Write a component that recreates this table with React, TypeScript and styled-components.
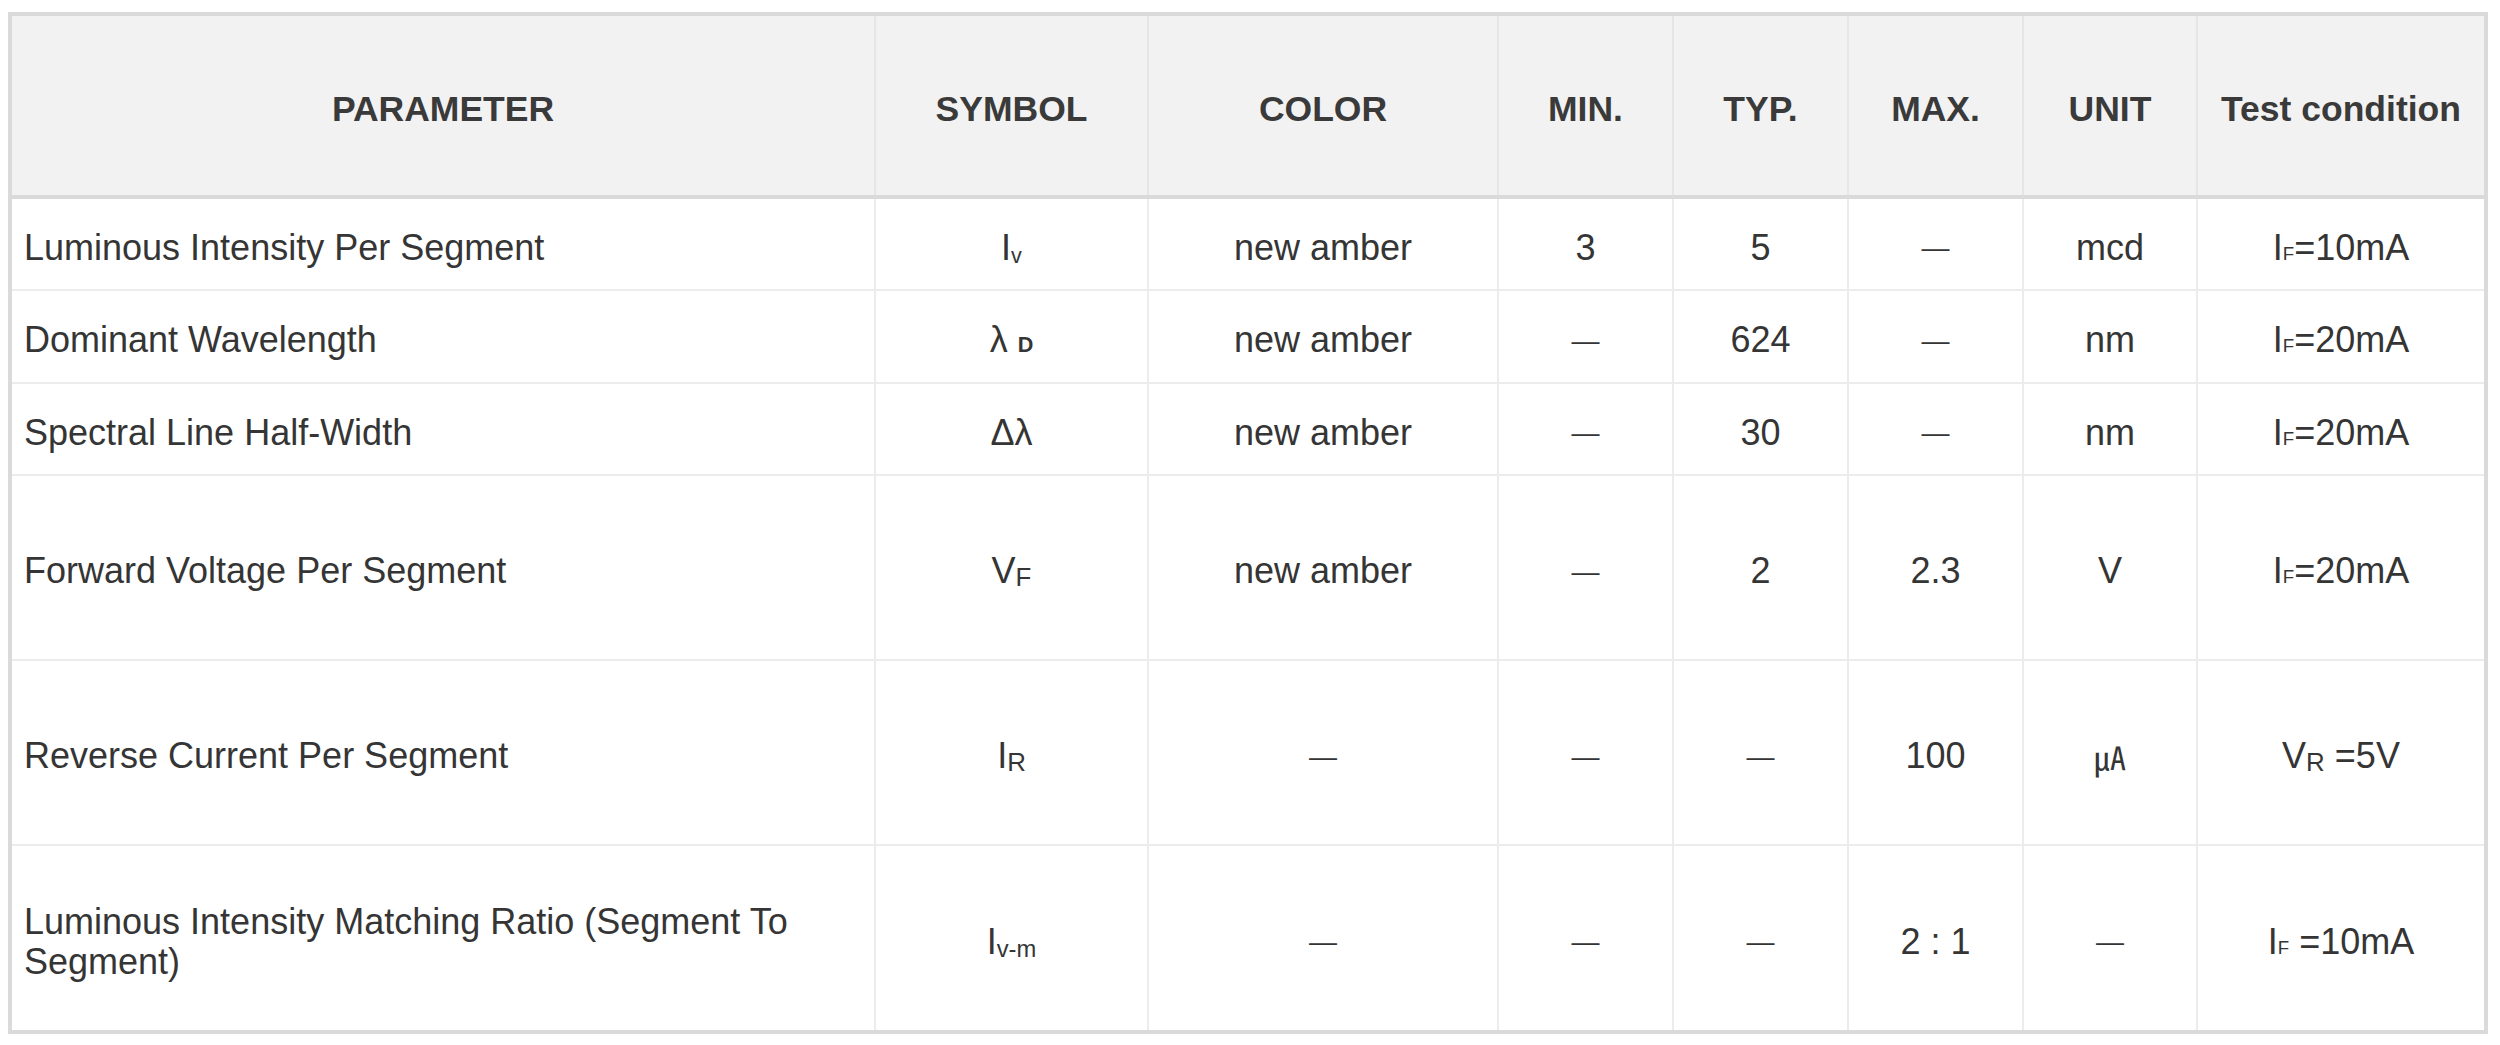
import React from "react";
import styled, { createGlobalStyle } from "styled-components";

const GlobalStyle = createGlobalStyle`
  html, body {
    margin: 0;
    padding: 0;
    background: #ffffff;
  }
  body {
    font-family: "Liberation Sans", Arial, Helvetica, sans-serif;
    color: #333333;
  }
  * { box-sizing: border-box; }
`;

const COLUMNS = "864px 273px 350px 175px 175px 175px 174px 286px";

const Page = styled.div`
  padding: 12px 0 0 8px;
`;

const Table = styled.div`
  display: flex;
  flex-direction: column;
  width: fit-content;
  border: 4px solid #dadada;
  background: #ffffff;
`;

const HeadRow = styled.div`
  display: grid;
  grid-template-columns: ${COLUMNS};
  height: 183px;
  background: #f2f2f2;
  border-bottom: 4px solid #dadada;
`;

const HeadCell = styled.div`
  display: flex;
  align-items: center;
  justify-content: center;
  padding: 8px 4px 0;
  font-size: 35.5px;
  font-weight: 700;
  color: #3a3a3a;
  white-space: nowrap;
  border-right: 2px solid #e6e6e6;
  &:last-child {
    border-right: none;
  }
`;

const Row = styled.div<{ $h: number }>`
  display: grid;
  grid-template-columns: ${COLUMNS};
  height: ${(p) => p.$h}px;
  border-bottom: 2px solid #ececec;
  &:last-child {
    border-bottom: none;
  }
`;

const Cell = styled.div<{ $left?: boolean }>`
  display: flex;
  align-items: center;
  justify-content: ${(p) => (p.$left ? "flex-start" : "center")};
  text-align: ${(p) => (p.$left ? "left" : "center")};
  padding: ${(p) => (p.$left ? "8px 10px 0 12px" : "8px 4px 0")};
  font-size: 36px;
  line-height: 1.12;
  color: #353535;
  border-right: 2px solid #ececec;
  &:last-child {
    border-right: none;
  }
`;

const Sub = styled.span<{ $size: number; $drop: number; $bold?: boolean }>`
  font-size: ${(p) => p.$size}em;
  font-weight: ${(p) => (p.$bold ? 700 : 400)};
  vertical-align: ${(p) => -p.$drop}px;
`;

const Dash = styled.span`
  font-size: 28px;
`;

const MicroAmp = styled.span`
  font-family: "Noto Sans CJK SC", "Noto Sans CJK JP", sans-serif;
  font-size: 32px;
`;

const D = () => <Dash>—</Dash>;

type RowData = { h: number; cells: React.ReactNode[] };

const headers = [
  "PARAMETER",
  "SYMBOL",
  "COLOR",
  "MIN.",
  "TYP.",
  "MAX.",
  "UNIT",
  "Test condition",
];

const IF = ({ v, gap }: { v: string; gap?: boolean }) => (
  <span>
    I<Sub $size={0.52} $drop={0}>F</Sub>
    {gap ? " " : ""}={v}
  </span>
);

const rows: RowData[] = [
  {
    h: 92,
    cells: [
      "Luminous Intensity Per Segment",
      <span>
        I<Sub $size={0.6} $drop={3}>v</Sub>
      </span>,
      "new amber",
      "3",
      "5",
      <D />,
      "mcd",
      <IF v="10mA" />,
    ],
  },
  {
    h: 93,
    cells: [
      "Dominant Wavelength",
      <span>
        λ <Sub $size={0.6} $drop={0} $bold>D</Sub>
      </span>,
      "new amber",
      <D />,
      "624",
      <D />,
      "nm",
      <IF v="20mA" />,
    ],
  },
  {
    h: 92,
    cells: [
      "Spectral Line Half-Width",
      "Δλ",
      "new amber",
      <D />,
      "30",
      <D />,
      "nm",
      <IF v="20mA" />,
    ],
  },
  {
    h: 185,
    cells: [
      "Forward Voltage Per Segment",
      <span>
        V<Sub $size={0.72} $drop={3}>F</Sub>
      </span>,
      "new amber",
      <D />,
      "2",
      "2.3",
      "V",
      <IF v="20mA" />,
    ],
  },
  {
    h: 185,
    cells: [
      "Reverse Current Per Segment",
      <span>
        I<Sub $size={0.72} $drop={3}>R</Sub>
      </span>,
      <D />,
      <D />,
      <D />,
      "100",
      <MicroAmp>㎂</MicroAmp>,
      <span>
        V<Sub $size={0.72} $drop={3}>R</Sub> =5V
      </span>,
    ],
  },
  {
    h: 184,
    cells: [
      "Luminous Intensity Matching Ratio (Segment To Segment)",
      <span>
        I<Sub $size={0.66} $drop={3}>v-m</Sub>
      </span>,
      <D />,
      <D />,
      <D />,
      "2 : 1",
      <D />,
      <IF v="10mA" gap />,
    ],
  },
];

export default function App() {
  return (
    <>
      <GlobalStyle />
      <Page>
        <Table>
          <HeadRow>
            {headers.map((h) => (
              <HeadCell key={h}>{h}</HeadCell>
            ))}
          </HeadRow>
          {rows.map((r, i) => (
            <Row key={i} $h={r.h}>
              {r.cells.map((c, j) => (
                <Cell key={j} $left={j === 0}>
                  {c}
                </Cell>
              ))}
            </Row>
          ))}
        </Table>
      </Page>
    </>
  );
}
